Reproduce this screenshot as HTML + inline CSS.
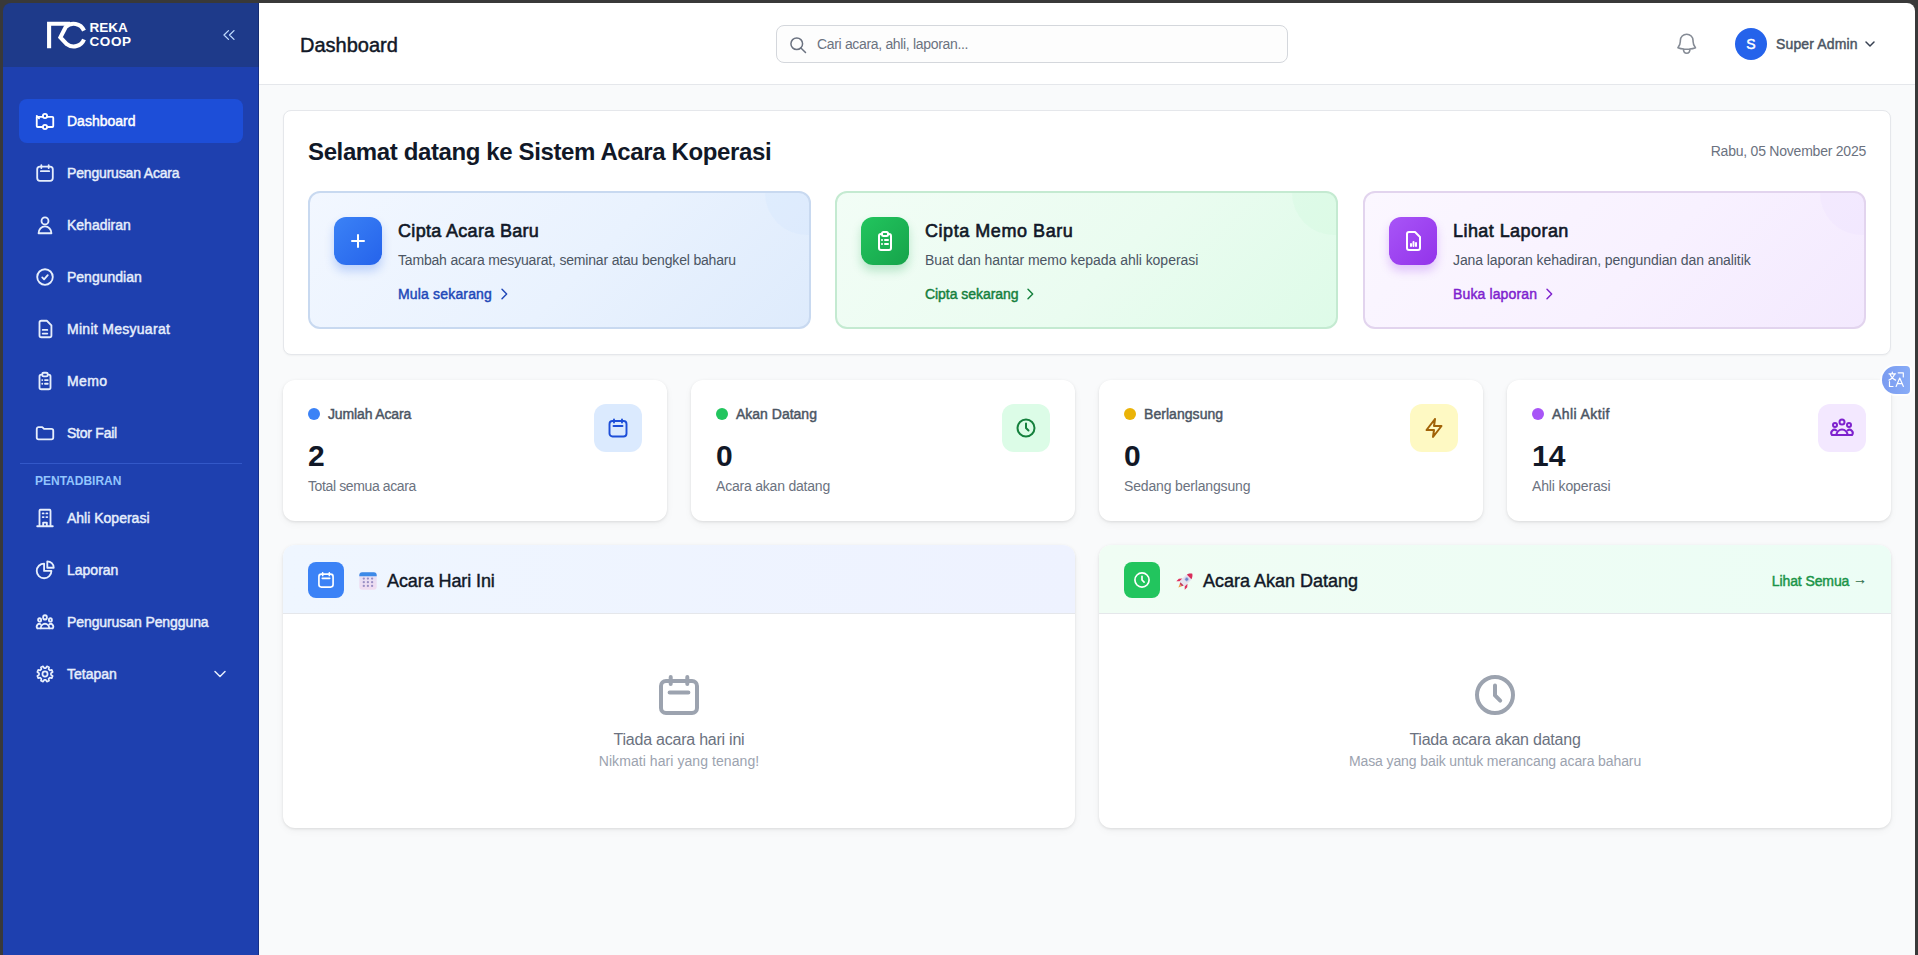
<!DOCTYPE html>
<html>
<head>
<meta charset="utf-8">
<style>
*{box-sizing:border-box;margin:0;padding:0}
html,body{width:1918px;height:955px;overflow:hidden;background:#f9fafb;font-family:"Liberation Sans",sans-serif;position:relative}
.abs{position:absolute}
svg{display:block;overflow:visible}
.frame{position:absolute;left:3px;top:3px;width:1912px;height:1100px;border-radius:8px;box-shadow:0 0 0 60px #393939;z-index:100;pointer-events:none}
.side{position:absolute;left:0;top:0;width:259px;height:955px;background:#1e40af}
.side-edge{position:absolute;left:258px;top:0;width:1px;height:955px;background:rgba(10,20,60,.35)}
.side-head{position:absolute;left:0;top:0;width:259px;height:67px;background:#1e3a8a}
.nav{position:absolute;left:19px;width:224px;height:44px;border-radius:8px}
.nav.active{background:#1d4ed8}
.nav svg{position:absolute;left:15px;top:11px;width:22px;height:22px}
.nav span{position:absolute;left:48px;top:0;line-height:44px;font-size:14px;font-weight:400;-webkit-text-stroke:0.45px currentColor;color:#e6eefc;white-space:nowrap}
.topbar{position:absolute;left:259px;top:0;width:1659px;height:85px;background:#fff;border-bottom:1px solid #e5e7eb}
.sb{font-weight:400 !important;-webkit-text-stroke:0.45px currentColor}
.card{position:absolute;background:#fff;border-radius:12px;box-shadow:0 1px 3px rgba(0,0,0,.1),0 3px 8px rgba(0,0,0,.04)}

.act{border-radius:12px;overflow:hidden}
.act .deco{position:absolute;right:-40px;top:-42px;width:84px;height:84px;border-radius:50%}
.act .ico{position:absolute;left:24px;top:24px;width:48px;height:48px;border-radius:12px;display:flex;align-items:center;justify-content:center}
.act .t{position:absolute;left:88px;top:27px;font-size:18px;line-height:22px;font-weight:400;-webkit-text-stroke:0.6px currentColor;letter-spacing:0.2px;color:#111827;white-space:nowrap}
.act .d{position:absolute;left:88px;top:59px;font-size:14px;line-height:16px;letter-spacing:-0.18px;color:#4b5563;white-space:nowrap}
.act .l{position:absolute;left:88px;top:93px;font-size:14px;line-height:16px;font-weight:400;-webkit-text-stroke:0.45px currentColor;white-space:nowrap}
.stat .dot{position:absolute;left:25px;top:28px;width:12px;height:12px;border-radius:50%}
.stat .lab{position:absolute;left:45px;top:26px;font-size:14px;line-height:16px;font-weight:400;-webkit-text-stroke:0.45px currentColor;color:#4b5563;white-space:nowrap}
.stat .num{position:absolute;left:25px;top:59px;font-size:30px;line-height:34px;font-weight:700;color:#111827}
.stat .sub{position:absolute;left:25px;top:98px;font-size:14px;line-height:16px;letter-spacing:-0.25px;color:#6b7280;white-space:nowrap}
.stat .sico{position:absolute;left:311px;top:24px;width:48px;height:48px;border-radius:12px;display:flex;align-items:center;justify-content:center}
.pan{overflow:hidden}
.pan .ph{position:absolute;left:0;top:0;width:100%;height:69px;border-bottom:1px solid #e5e7eb}
.pan .pico{position:absolute;left:25px;top:17px;width:36px;height:36px;border-radius:8px;display:flex;align-items:center;justify-content:center}
.pan .emo{position:absolute;left:76px;top:27px}
.pan .pt{position:absolute;left:104px;top:25px;font-size:18px;line-height:22px;font-weight:400;-webkit-text-stroke:0.42px currentColor;color:#111827;white-space:nowrap}
.pan .eico{position:absolute;left:376px;top:130px}
.pan .e1{position:absolute;left:0;width:100%;top:186px;letter-spacing:-0.23px;text-align:center;font-size:16px;line-height:18px;color:#6b7280}
.pan .e2{position:absolute;left:0;width:100%;top:208px;text-align:center;font-size:14px;line-height:16px;color:#9ca3af}
</style>
</head>
<body>
<div class="frame"></div>

<!-- SIDEBAR -->
<div class="side">
  <div class="side-head"></div>
  <div class="side-edge"></div>
  <!-- logo -->
  <svg class="abs" style="left:40px;top:15px" width="52" height="40" viewBox="40 15 52 40">
    <path d="M49.1 48.2V23.8H70" fill="none" stroke="#fff" stroke-width="4.1"/>
    <path d="M84 30.6A11.2 11.2 0 0 0 65.6 27.2L60.4 37.4L66.8 44.1A11.2 11.2 0 0 0 84 39.4" fill="none" stroke="#fff" stroke-width="4.1" stroke-linejoin="miter" stroke-miterlimit="10"/>
  </svg>
  <div class="abs" style="left:89.5px;top:21px;font-size:13.5px;line-height:14.4px;font-weight:700;color:#fff">REKA<br><span style="letter-spacing:0.6px">COOP</span></div>
  <svg class="abs" style="left:221px;top:29px" width="14" height="12" viewBox="0 0 14 12">
    <path d="M7.5 1.6L3 6l4.5 4.4M13 1.6L8.5 6l4.5 4.4" fill="none" stroke="#bfdbfe" stroke-width="1.3" stroke-linecap="round" stroke-linejoin="round"/>
  </svg>

  <div class="nav active" style="top:99px">
    <svg viewBox="0 0 24 24" fill="none" stroke="#fff" stroke-width="2" stroke-linecap="round" stroke-linejoin="round"><path d="M3 7.5h6.5M14.5 7.5H20a1 1 0 0 1 1 1V17.5a1 1 0 0 1-1 1h-5.5M9.5 18.5H4a1 1 0 0 1-1-1V7.5"/><circle cx="12" cy="6.5" r="2.3"/><circle cx="12" cy="18.5" r="2.3"/><path d="M3 6.5l2.5 2.5"/></svg>
    <span style="color:#fff">Dashboard</span>
  </div>
  <div class="nav" style="top:151px">
    <svg viewBox="0 0 24 24" fill="none" stroke="#e6eefc" stroke-width="2" stroke-linecap="round" stroke-linejoin="round"><rect x="3.5" y="5" width="17" height="15.5" rx="3"/><path d="M8 3.5v3M16 3.5v3M7.5 10h9"/></svg>
    <span style="letter-spacing:-0.17px">Pengurusan Acara</span>
  </div>
  <div class="nav" style="top:203px">
    <svg viewBox="0 0 24 24" fill="none" stroke="#e6eefc" stroke-width="2" stroke-linecap="round" stroke-linejoin="round"><circle cx="12" cy="7.5" r="3.8"/><path d="M5 21a7 7.5 0 0 1 14 0z"/></svg>
    <span>Kehadiran</span>
  </div>
  <div class="nav" style="top:255px">
    <svg viewBox="0 0 24 24" fill="none" stroke="#e6eefc" stroke-width="2" stroke-linecap="round" stroke-linejoin="round"><circle cx="12" cy="12" r="8.5"/><path d="M9 12.5l2 2 4-4.5"/></svg>
    <span>Pengundian</span>
  </div>
  <div class="nav" style="top:307px">
    <svg viewBox="0 0 24 24" fill="none" stroke="#e6eefc" stroke-width="2" stroke-linecap="round" stroke-linejoin="round"><path d="M8 3h6l5 5v11a2 2 0 0 1-2 2H8a2 2 0 0 1-2-2V5a2 2 0 0 1 2-2z"/><path d="M9.5 13h5M9.5 17h5"/></svg>
    <span style="letter-spacing:0.29px">Minit Mesyuarat</span>
  </div>
  <div class="nav" style="top:359px">
    <svg viewBox="0 0 24 24" fill="none" stroke="#e6eefc" stroke-width="2" stroke-linecap="round" stroke-linejoin="round"><path d="M9 5H8a2 2 0 0 0-2 2v12a2 2 0 0 0 2 2h8a2 2 0 0 0 2-2V7a2 2 0 0 0-2-2h-1"/><rect x="9" y="3" width="6" height="4" rx="1.5"/><path d="M9 11h.01M9 15h.01M12 11h3M12 15h3"/></svg>
    <span style="letter-spacing:0.4px">Memo</span>
  </div>
  <div class="nav" style="top:411px">
    <svg viewBox="0 0 24 24" fill="none" stroke="#e6eefc" stroke-width="2" stroke-linecap="round" stroke-linejoin="round"><path d="M3 7.5a2 2 0 0 1 2-2h4l2 2h8a2 2 0 0 1 2 2V17a2 2 0 0 1-2 2H5a2 2 0 0 1-2-2z"/></svg>
    <span style="letter-spacing:-0.24px">Stor Fail</span>
  </div>
  <div class="abs" style="left:20px;top:463px;width:222px;height:1px;background:#3358c8"></div>
  <div class="abs" style="left:35px;top:474px;font-size:12px;line-height:14px;font-weight:700;color:#93c5fd;letter-spacing:0px">PENTADBIRAN</div>
  <div class="nav" style="top:496px">
    <svg viewBox="0 0 24 24" fill="none" stroke="#e6eefc" stroke-width="2" stroke-linecap="round" stroke-linejoin="round"><path d="M6 21V4a1 1 0 0 1 1-1h10a1 1 0 0 1 1 1v17M3.5 21h17M10 21v-4h4v4M9.5 7h1M13.5 7h1M9.5 11h1M13.5 11h1"/></svg>
    <span>Ahli Koperasi</span>
  </div>
  <div class="nav" style="top:548px">
    <svg viewBox="0 0 24 24" fill="none" stroke="#e6eefc" stroke-width="2" stroke-linecap="round" stroke-linejoin="round"><path d="M11 5a8 8 0 1 0 8 8h-8z"/><path d="M14.5 2.5v7h7a7 7 0 0 0-7-7z"/></svg>
    <span>Laporan</span>
  </div>
  <div class="nav" style="top:600px">
    <svg viewBox="0 0 24 24" fill="none" stroke="#e6eefc" stroke-width="2" stroke-linecap="round" stroke-linejoin="round"><g transform="translate(12 12.5) scale(0.84 0.92) translate(-12 -12)" stroke-width="2.3"><circle cx="12" cy="6" r="2.5"/><circle cx="5" cy="9" r="2"/><circle cx="19" cy="9" r="2"/><path d="M6.5 19a5.5 5.5 0 0 1 11 0z"/><path d="M2 19a3.2 3.2 0 0 1 4.5-4.5M22 19a3.2 3.2 0 0 0-4.5-4.5M2 19h4.5M17.5 19H22"/></g></svg>
    <span style="letter-spacing:-0.09px">Pengurusan Pengguna</span>
  </div>
  <div class="nav" style="top:652px">
    <svg viewBox="0 0 24 24" fill="none" stroke="#e6eefc" stroke-width="1.9" stroke-linecap="round" stroke-linejoin="round"><path d="M18.53 12.94 L20.35 14.07 L19.36 16.44 L17.28 15.96 L15.96 17.28 L16.44 19.36 L14.07 20.35 L12.94 18.53 L11.06 18.53 L9.93 20.35 L7.56 19.36 L8.04 17.28 L6.72 15.96 L4.64 16.44 L3.65 14.07 L5.47 12.94 L5.47 11.06 L3.65 9.93 L4.64 7.56 L6.72 8.04 L8.04 6.72 L7.56 4.64 L9.93 3.65 L11.06 5.47 L12.94 5.47 L14.07 3.65 L16.44 4.64 L15.96 6.72 L17.28 8.04 L19.36 7.56 L20.35 9.93 L18.53 11.06Z"/><circle cx="12" cy="12" r="2.8"/></svg>
    <span>Tetapan</span>
    <svg style="left:195px;top:18px;width:12px;height:8px" viewBox="0 0 12 8" fill="none" stroke="#e6eefc" stroke-width="1.5" stroke-linecap="round" stroke-linejoin="round"><path d="M1 1.5l5 5 5-5"/></svg>
  </div>
</div>

<!-- TOPBAR -->
<div class="topbar"></div>
<div class="abs sb" style="left:300px;top:32px;font-size:20px;line-height:26px;color:#111827">Dashboard</div>
<div class="abs" style="left:776px;top:25px;width:512px;height:38px;border:1px solid #d4d7dc;border-radius:8px;background:#fdfdfd"></div>
<svg class="abs" style="left:788px;top:35px" width="20" height="20" viewBox="0 0 24 24" fill="none" stroke="#6b7280" stroke-width="1.8" stroke-linecap="round"><circle cx="10.5" cy="10.5" r="7"/><path d="M15.5 15.5l5.5 5.5"/></svg>
<div class="abs" style="left:817px;top:36px;font-size:14px;line-height:16px;color:#6b7280;letter-spacing:-0.33px">Cari acara, ahli, laporan...</div>
<svg class="abs" style="left:1673.5px;top:30.8px" width="25.4" height="25.4" viewBox="0 0 24 24" fill="none" stroke="#858b95" stroke-width="1.5" stroke-linecap="round" stroke-linejoin="round"><path d="M14.857 17.082a23.848 23.848 0 0 0 5.454-1.31A8.967 8.967 0 0 1 18 9.75v-.7V9A6 6 0 0 0 6 9v.75a8.967 8.967 0 0 1-2.312 6.022c1.733.64 3.56 1.085 5.455 1.31m5.714 0a24.255 24.255 0 0 1-5.714 0m5.714 0a3 3 0 1 1-5.714 0"/></svg>
<div class="abs" style="left:1735px;top:28px;width:32px;height:32px;border-radius:50%;background:#2563eb;color:#fff;font-size:14px;font-weight:400;-webkit-text-stroke:0.45px #fff;line-height:32px;text-align:center">S</div>
<div class="abs sb" style="left:1776px;top:36px;font-size:14px;line-height:16px;color:#4b5563;letter-spacing:0.14px">Super Admin</div>
<svg class="abs" style="left:1865px;top:41px" width="10" height="6" viewBox="0 0 10 6" fill="none" stroke="#374151" stroke-width="1.5" stroke-linecap="round" stroke-linejoin="round"><path d="M1 1l4 4 4-4"/></svg>


<!-- WELCOME -->
<div class="abs" style="left:283px;top:110px;width:1608px;height:245px;background:#fff;border:1px solid #e5e7eb;border-radius:8px;box-shadow:0 1px 2px rgba(0,0,0,.04)"></div>
<div class="abs" style="left:308px;top:138px;font-size:24px;line-height:28px;font-weight:700;color:#111827;letter-spacing:-0.38px">Selamat datang ke Sistem Acara Koperasi</div>
<div class="abs" style="left:1600px;top:143px;width:266px;text-align:right;font-size:14px;line-height:16px;color:#6b7280;letter-spacing:-0.23px">Rabu, 05 November 2025</div>

<div class="abs act" style="left:308px;top:191px;width:503px;height:138px;border:2px solid #c8d9f0;background:linear-gradient(135deg,#f2f7ff 0%,#e9f2fe 55%,#deebfc 100%)">
  <div class="deco" style="background:rgba(191,219,254,.14)"></div>
  <div class="ico" style="background:linear-gradient(135deg,#3b82f6,#2563eb);box-shadow:0 6px 10px rgba(37,99,235,.25)">
    <svg width="24" height="24" viewBox="0 0 24 24" fill="none" stroke="#fff" stroke-width="2" stroke-linecap="round"><path d="M12 6v12M6 12h12"/></svg>
  </div>
  <div class="t" style="letter-spacing:0.32px">Cipta Acara Baru</div>
  <div class="d">Tambah acara mesyuarat, seminar atau bengkel baharu</div>
  <div class="l" style="color:#2148b8;letter-spacing:0.17px">Mula sekarang <svg style="display:inline-block;vertical-align:-3px;margin-left:0px" width="16" height="16" viewBox="0 0 24 24" fill="none" stroke="currentColor" stroke-width="2.2" stroke-linecap="round" stroke-linejoin="round"><path d="M9 5l7 7-7 7"/></svg></div>
</div>
<div class="abs act" style="left:835px;top:191px;width:503px;height:138px;border:2px solid #c4ead1;background:linear-gradient(135deg,#f2fdf6 0%,#eafcf0 55%,#defbe8 100%)">
  <div class="deco" style="background:rgba(187,247,208,.14)"></div>
  <div class="ico" style="background:linear-gradient(135deg,#22c55e,#16a34a);box-shadow:0 6px 10px rgba(22,163,74,.25)">
    <svg width="24" height="24" viewBox="0 0 24 24" fill="none" stroke="#fff" stroke-width="2" stroke-linecap="round" stroke-linejoin="round"><path d="M9 5H8a2 2 0 0 0-2 2v12a2 2 0 0 0 2 2h8a2 2 0 0 0 2-2V7a2 2 0 0 0-2-2h-1"/><rect x="9" y="3" width="6" height="4" rx="1.5"/><path d="M9 11h.01M9 15h.01M12 11h3M12 15h3"/></svg>
  </div>
  <div class="t" style="letter-spacing:0.55px">Cipta Memo Baru</div>
  <div class="d" style="letter-spacing:-0.035px">Buat dan hantar memo kepada ahli koperasi</div>
  <div class="l" style="color:#15803d;letter-spacing:-0.05px">Cipta sekarang <svg style="display:inline-block;vertical-align:-3px;margin-left:0px" width="16" height="16" viewBox="0 0 24 24" fill="none" stroke="currentColor" stroke-width="2.2" stroke-linecap="round" stroke-linejoin="round"><path d="M9 5l7 7-7 7"/></svg></div>
</div>
<div class="abs act" style="left:1363px;top:191px;width:503px;height:138px;border:2px solid #e2d4ee;background:linear-gradient(135deg,#fbf7ff 0%,#f8f1ff 55%,#f3e9fe 100%)">
  <div class="deco" style="background:rgba(233,213,255,.16)"></div>
  <div class="ico" style="background:linear-gradient(135deg,#a855f7,#9333ea);box-shadow:0 6px 10px rgba(147,51,234,.25)">
    <svg width="24" height="24" viewBox="0 0 24 24" fill="none" stroke="#fff" stroke-width="2" stroke-linecap="round" stroke-linejoin="round"><path d="M8 3h6l5 5v11a2 2 0 0 1-2 2H8a2 2 0 0 1-2-2V5a2 2 0 0 1 2-2z"/><path d="M10 17v-2M12.5 17v-4M15 17v-3"/></svg>
  </div>
  <div class="t" style="letter-spacing:0.44px">Lihat Laporan</div>
  <div class="d" style="letter-spacing:-0.095px">Jana laporan kehadiran, pengundian dan analitik</div>
  <div class="l" style="color:#7e22ce;letter-spacing:0.13px">Buka laporan <svg style="display:inline-block;vertical-align:-3px;margin-left:0px" width="16" height="16" viewBox="0 0 24 24" fill="none" stroke="currentColor" stroke-width="2.2" stroke-linecap="round" stroke-linejoin="round"><path d="M9 5l7 7-7 7"/></svg></div>
</div>

<!-- STATS -->
<div class="card stat" style="left:283px;top:380px;width:384px;height:141px">
  <div class="dot" style="background:#3b82f6"></div><div class="lab" style="letter-spacing:-0.14px">Jumlah Acara</div>
  <div class="num">2</div><div class="sub" style="letter-spacing:-0.38px">Total semua acara</div>
  <div class="sico" style="background:#dbeafe"><svg width="24" height="24" viewBox="0 0 24 24" fill="none" stroke="#1d4ed8" stroke-width="1.9" stroke-linecap="round" stroke-linejoin="round"><rect x="3.5" y="5" width="17" height="15.5" rx="3"/><path d="M8 3.5v3M16 3.5v3M7.5 10h9"/></svg></div>
</div>
<div class="card stat" style="left:691px;top:380px;width:384px;height:141px">
  <div class="dot" style="background:#22c55e"></div><div class="lab">Akan Datang</div>
  <div class="num">0</div><div class="sub" style="letter-spacing:-0.21px">Acara akan datang</div>
  <div class="sico" style="background:#dcfce7"><svg width="24" height="24" viewBox="0 0 24 24" fill="none" stroke="#15803d" stroke-width="2" stroke-linecap="round" stroke-linejoin="round"><circle cx="12" cy="12" r="8.5"/><path d="M12 7.5V12l2.5 2.5"/></svg></div>
</div>
<div class="card stat" style="left:1099px;top:380px;width:384px;height:141px">
  <div class="dot" style="background:#eab308"></div><div class="lab" style="letter-spacing:0.05px">Berlangsung</div>
  <div class="num">0</div><div class="sub" style="letter-spacing:-0.16px">Sedang berlangsung</div>
  <div class="sico" style="background:#fef9c3"><svg width="24" height="24" viewBox="0 0 24 24" fill="none" stroke="#a16207" stroke-width="2" stroke-linecap="round" stroke-linejoin="round"><path d="M13 3L4.5 14H12l-1 7 8.5-11H12z"/></svg></div>
</div>
<div class="card stat" style="left:1507px;top:380px;width:384px;height:141px">
  <div class="dot" style="background:#a855f7"></div><div class="lab" style="letter-spacing:0.42px">Ahli Aktif</div>
  <div class="num">14</div><div class="sub" style="letter-spacing:-0.13px">Ahli koperasi</div>
  <div class="sico" style="background:#f3e8ff"><svg width="24" height="24" viewBox="0 0 24 24" fill="none" stroke="#7e22ce" stroke-width="2" stroke-linecap="round" stroke-linejoin="round"><circle cx="12" cy="6" r="2.5"/><circle cx="5" cy="9" r="2"/><circle cx="19" cy="9" r="2"/><path d="M6.5 19a5.5 5.5 0 0 1 11 0z"/><path d="M2 19a3.2 3.2 0 0 1 4.5-4.5M22 19a3.2 3.2 0 0 0-4.5-4.5M2 19h4.5M17.5 19H22"/></svg></div>
</div>

<!-- PANELS -->
<div class="card pan" style="left:283px;top:545px;width:792px;height:283px">
  <div class="ph" style="background:linear-gradient(90deg,#eff6ff,#eef2ff)"></div>
  <div class="pico" style="background:#3b82f6"><svg width="20" height="20" viewBox="0 0 24 24" fill="none" stroke="#fff" stroke-width="2" stroke-linecap="round" stroke-linejoin="round"><rect x="3.5" y="5" width="17" height="15.5" rx="3"/><path d="M8 3.5v3M16 3.5v3M7.5 10h9"/></svg></div>
  <svg class="emo" width="18" height="18" viewBox="0 0 18 18"><defs><linearGradient id="cb" x1="0" y1="0" x2="0" y2="1"><stop offset="0" stop-color="#e4e0f6"/><stop offset="1" stop-color="#f1dcf0"/></linearGradient></defs><rect x="0.3" y="0.3" width="17.4" height="17.4" rx="3" fill="url(#cb)"/><path d="M0.3 3.3a3 3 0 0 1 3-3h11.4a3 3 0 0 1 3 3v1H0.3z" fill="#3d8ae8"/><g fill="#9a8fc4"><circle cx="4.8" cy="6.6" r="1.15"/><circle cx="8.9" cy="6.6" r="1.15"/><circle cx="13.1" cy="6.6" r="1.15"/><circle cx="4.8" cy="10.2" r="1.15"/><circle cx="8.9" cy="10.2" r="1.15"/><circle cx="13.1" cy="10.2" r="1.15"/><circle cx="4.8" cy="13.9" r="1.15"/><circle cx="8.9" cy="13.9" r="1.15"/><circle cx="13.1" cy="13.9" r="1.15"/></g></svg>
  <div class="pt" style="letter-spacing:-0.09px">Acara Hari Ini</div>
  <svg class="eico" width="40" height="40" viewBox="0 0 20 20" fill="none" stroke="#9ca3af" stroke-width="2" stroke-linecap="round" stroke-linejoin="round"><rect x="1" y="3" width="18" height="16" rx="2.5"/><path d="M5.85 1v3.5M14.15 1v3.5M5.3 8.8h9.4"/></svg>
  <div class="e1">Tiada acara hari ini</div>
  <div class="e2" style="letter-spacing:0.07px">Nikmati hari yang tenang!</div>
</div>
<div class="card pan" style="left:1099px;top:545px;width:792px;height:283px">
  <div class="ph" style="background:linear-gradient(90deg,#f0fdf4,#ecfdf5)"></div>
  <div class="pico" style="background:#22c55e"><svg width="20" height="20" viewBox="0 0 24 24" fill="none" stroke="#fff" stroke-width="2" stroke-linecap="round" stroke-linejoin="round"><circle cx="12" cy="12" r="8.5"/><path d="M12 7.5V12l2.5 2.5"/></svg></div>
  <svg class="emo" style="left:75.5px;top:24.5px" width="21" height="21" viewBox="0 0 24 24"><g transform="rotate(45 12 12)"><path d="M12 1C15.6 3.6 16.2 7 16.2 10V17.5H7.8V10C7.8 7 8.4 3.6 12 1z" fill="#e6e2ee"/><path d="M12 1C14.3 2.6 15.3 4.6 15.7 6.2H8.3C8.7 4.6 9.7 2.6 12 1z" fill="#d92d5a"/><circle cx="12" cy="10" r="2.1" fill="#6f86c9" stroke="#bcc6e6" stroke-width="0.8"/><path d="M7.8 13L5.2 16V20L7.8 17.5z M16.2 13L18.8 16V20L16.2 17.5z" fill="#e0305f"/><path d="M9.3 17.5h5.4l-1 2.2h-3.4z" fill="#c23a5e"/><path d="M10.3 19.7h3.4L12 23.5z" fill="#f0a04b"/></g></svg>
  <div class="pt">Acara Akan Datang</div>
  <div class="abs" style="right:24px;top:28px;font-size:14px;line-height:16px;font-weight:400;-webkit-text-stroke:0.45px currentColor;letter-spacing:-0.1px;color:#1a9448">Lihat Semua <span style="position:relative;top:-2px;color:#2f6b48;-webkit-text-stroke:0.2px currentColor">&#8594;</span></div>
  <svg class="eico" width="40" height="40" viewBox="0 0 20 20" fill="none" stroke="#9ca3af" stroke-width="2" stroke-linecap="round" stroke-linejoin="round"><circle cx="10" cy="10" r="9"/><path d="M10 5.2V10.2l2.6 2.6"/></svg>
  <div class="e1">Tiada acara akan datang</div>
  <div class="e2" style="letter-spacing:-0.1px">Masa yang baik untuk merancang acara baharu</div>
</div>

<!-- translate -->
<div class="abs" style="left:1882px;top:366px;width:28px;height:28px;border-radius:14px 4px 4px 14px;background:linear-gradient(90deg,#7a9bf0,#88acf7);box-shadow:0 0 0 2px rgba(255,255,255,.8)"></div>
<svg class="abs" style="left:1888px;top:371px" width="17" height="17" viewBox="0 0 17 17" fill="none" stroke="#fff" stroke-width="1.2" stroke-linecap="round" stroke-linejoin="round"><path d="M4.3 1.2v1.3M1 2.8h6.6M1.9 2.8C3 6 5 8 7.6 9.1M6.7 2.8C5.6 6 3.6 8 1 9.1"/><path d="M10.2 1.8h5.1v4.2"/><path d="M8.1 15.4L11.75 7l3.65 8.4M9.4 12.6h4.7"/><path d="M1.5 10.7v4.8H5"/></svg>


</body>
</html>
